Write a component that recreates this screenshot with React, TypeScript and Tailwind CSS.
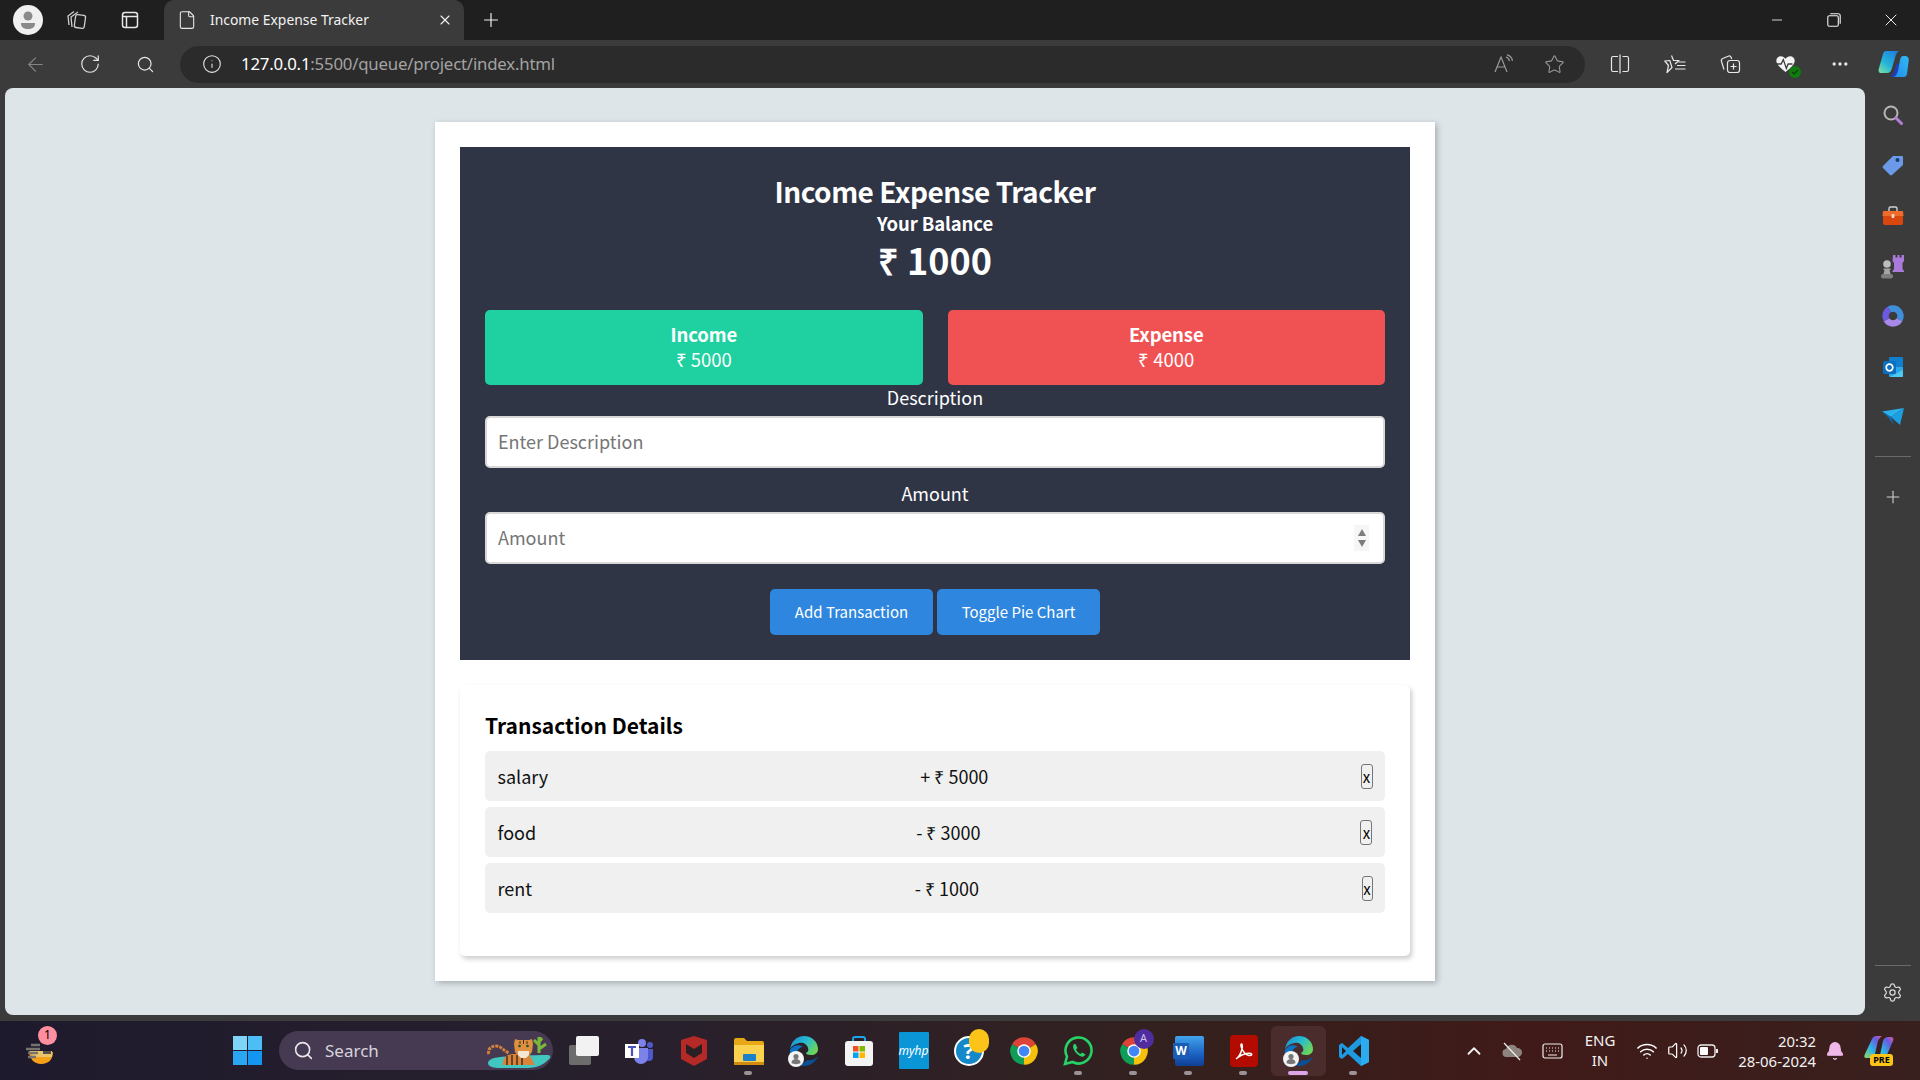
import { ArrowLeft, Bell, ChevronUp, Ellipsis, File, Info, Minus, Plus, RotateCw, Search, Settings, Star, Volume2, Wifi, X } from "lucide-react";
import type { ReactNode } from "react";

const uiFont = "font-['Noto_Sans','Open_Sans',sans-serif]";

const Slot = ({ w, children, className = "" }: { w: string; children?: ReactNode; className?: string }) => (
    <div className={`flex shrink-0 items-center justify-center ${w} ${className}`}>{children}</div>
);

const Chrome = ({ size = 30 }: { size?: number }) => (
    <svg width={size} height={size} viewBox="0 0 24 24">
        <path d="M12 12L2.47 6.5A11 11 0 0 1 21.53 6.5z" fill="#db4437" />
        <path d="M12 12L21.53 6.5A11 11 0 0 1 12 23z" fill="#f4c20d" />
        <path d="M12 12L12 23A11 11 0 0 1 2.47 6.5z" fill="#0f9d58" />
        <circle cx="12" cy="12" r="5.4" fill="#fff" />
        <circle cx="12" cy="12" r="4.3" fill="#4285f4" />
    </svg>
);

const EdgeProfile = () => (
    <svg width="32" height="32" viewBox="0 0 32 32">
        <defs>
            <linearGradient id="edgeA" x1="0" y1="0" x2="1" y2="0.6">
                <stop offset="0" stopColor="#1b86d4" />
                <stop offset="0.55" stopColor="#27bcd0" />
                <stop offset="1" stopColor="#6bd45a" />
            </linearGradient>
        </defs>
        <path d="M2 15C3 6 9 1 16 1c8 0 14 6 14 13 0 4-3 6-7 6-3 0-5-1-5-2 2-1 3-3 2-5-1-4-5-6-9-5-4 1-8 3-9 7z" fill="url(#edgeA)" />
        <path d="M30 21c-2 6-8 10-14 10-3 0-5-1-7-2 4 0 8-1 10-4 3 1 8 0 11-4z" fill="#0b4f96" />
        <path d="M2 15c3-5 9-6 13-3-3 0-5 2-6 5-1 3 0 7 2 10C5 25 1 21 2 15z" fill="#0c73c4" />
        <circle cx="8" cy="24" r="8" fill="#f4f4f4" />
        <circle cx="8" cy="21.5" r="2.6" fill="#777" />
        <path d="M3.5 28c0-3 2-4 4.500-4s4.500 1 4.500 4c-2 1.500-7 1.500-9 0z" fill="#777" />
    </svg>
);

const TaskIcon = ({ children, dot, active }: { children: ReactNode; dot?: boolean; active?: boolean }) => (
    <div className={`relative flex h-[50px] w-[55px] shrink-0 items-center justify-center rounded-[6px] ${active ? "bg-[#4a2c2c]" : ""}`}>
        {children}
        {dot && <div className="absolute bottom-[1px] left-[23px] h-[4px] w-[8px] rounded-full bg-[#9c9295]" />}
        {active && <div className="absolute bottom-[1px] left-[17px] h-[4px] w-[20px] rounded-full bg-[#dba6e6]" />}
    </div>
);

const TabStrip = () => (
    <div className="flex h-[40px] items-end bg-[#1f1f1f] text-white">
        <Slot w="w-[55px]" className="h-[40px]">
            <div className="flex h-[30px] w-[30px] items-center justify-center rounded-full bg-[#f0f0f0]">
                <svg width="18" height="20" viewBox="0 0 18 20">
                    <circle cx="9" cy="6" r="4.500" fill="#8a8a8a" />
                    <path d="M2 13h14v1c0 3-3 5-7 5s-7-2-7-5z" fill="#8a8a8a" />
                </svg>
            </div>
        </Slot>
        <Slot w="w-[44px]" className="h-[40px]">
            <svg width="22" height="22" viewBox="0 0 22 22" fill="none" stroke="#cfcfcf" strokeWidth="1.300">
                <path d="M3 16L2 7l6-4.500" />
                <path d="M6 18L5 8l7-5" />
                <rect x="9" y="6" width="10" height="13" rx="2" transform="rotate(8 14 12)" />
            </svg>
        </Slot>
        <Slot w="w-[62px]" className="h-[40px]">
            <svg width="20" height="20" viewBox="0 0 20 20" fill="none" stroke="#e8e8e8" strokeWidth="1.500">
                <rect x="2.500" y="2.500" width="15" height="15" rx="2.500" />
                <path d="M2.500 6.500h15M6.500 6.500v11" />
            </svg>
        </Slot>
        <div className="ml-[3px] flex h-[40px] w-[300px] items-center rounded-t-[10px] bg-[#3b3b3b] pr-[11px] pl-[13px]">
            <File size={20} strokeWidth={1.3} className="text-[#e6e6e6]" />
            <span className={`ml-[13px] flex-1 text-[13.9px] text-[#f2f2f2] ${uiFont}`}>Income Expense Tracker</span>
            <X size={16} strokeWidth={1.6} className="text-[#f2f2f2]" />
        </div>
        <Slot w="w-[54px]" className="h-[40px]">
            <Plus size={22} strokeWidth={1.3} className="text-[#f0f0f0]" />
        </Slot>
        <div className="flex-1" />
        <Slot w="w-[57px]" className="h-[40px]">
            <Minus size={16} strokeWidth={1.2} />
        </Slot>
        <Slot w="w-[57px]" className="h-[40px]">
            <svg width="14" height="14" viewBox="0 0 14 14" fill="none" stroke="#f2f2f2" strokeWidth="1.100">
                <rect x="0.800" y="2.800" width="10.500" height="10.500" rx="1.500" />
                <path d="M3.200 0.800h8c1.200 0 2 .8 2 2v8" />
            </svg>
        </Slot>
        <Slot w="w-[58px]" className="h-[40px]">
            <X size={20} strokeWidth={1.1} />
        </Slot>
    </div>
);

const Toolbar = () => (
    <div className="flex h-[48px] items-center bg-[#3b3b3b] text-[#e6e6e6]">
        <Slot w="w-[62px]" className="pl-[8px]">
            <ArrowLeft size={23} strokeWidth={1.2} className="text-[#858585]" />
        </Slot>
        <Slot w="w-[56px]">
            <RotateCw size={22} strokeWidth={1.3} />
        </Slot>
        <Slot w="w-[54px]">
            <Search size={19} strokeWidth={1.5} />
        </Slot>
        <div className="ml-[8px] flex h-[37px] w-[1405px] items-center rounded-full bg-[#2b2b2b] pl-[22px]">
            <Info size={20} strokeWidth={1.3} />
            <span className={`ml-[19px] flex-1 text-[16.8px] tracking-[-0.2px] text-[#a3a3a3] ${uiFont}`}>
                <span className="text-white">127.0.0.1</span>:5500/queue/project/index.html
            </span>
            <Slot w="w-[50px]">
                <svg width="20" height="20" viewBox="0 0 20 20" fill="none" stroke="#9a9a9a" strokeWidth="1.200">
                    <path d="M1 18L7 3l6 15M3.500 13h7" />
                    <path d="M12 3c2 .5 3 2 3.500 4M13 .8c3 .7 5 3 5.500 6" />
                </svg>
            </Slot>
            <Slot w="w-[50px]" className="mr-[6px]">
                <Star size={21} strokeWidth={1.2} className="text-[#9a9a9a]" />
            </Slot>
        </div>
        <Slot w="w-[70px]">
            <svg width="20" height="20" viewBox="0 0 20 20" fill="none" stroke="#e8e8e8" strokeWidth="1.200">
                <path d="M8 2.500H3a1.500 1.500 0 0 0-1.500 1.500v12A1.500 1.500 0 0 0 3 17.500h5M12.500 2.500H17A1.500 1.500 0 0 1 18.500 4v12a1.500 1.500 0 0 1-1.500 1.500h-4.500M10 .5v19" />
            </svg>
        </Slot>
        <Slot w="w-[40px]">
            <svg width="22" height="20" viewBox="0 0 22 20" fill="none" stroke="#e8e8e8" strokeWidth="1.200" strokeLinejoin="round">
                <path d="M7.500 1.500l2 5H15l-4 3.500M8 13.500L3 18.500l1.500-7L.8 7l5-.5z" />
                <path d="M14.500 8h7M13 11.500h8.500M11 15h10.500" />
            </svg>
        </Slot>
        <Slot w="w-[70px]">
            <svg width="22" height="22" viewBox="0 0 22 22" fill="none" stroke="#e8e8e8" strokeWidth="1.200">
                <path d="M5 16.500l-2.500-8c-.5-1.500.3-2.800 1.700-3.300l5-2c1.300-.5 2.500 0 3 1.300l.5 1.500" />
                <rect x="8.500" y="7.500" width="12" height="12" rx="2.500" />
                <path d="M14.500 10.500v6M11.500 13.500h6" />
            </svg>
        </Slot>
        <Slot w="w-[40px]">
            <div className="relative h-[20px] w-[21px]">
                <svg width="21" height="20" viewBox="0 0 24 22">
                    <path d="M12 20C5 15 1.500 11 1.500 7 1.500 4 4 2 6.500 2 9 2 11 3.500 12 5c1-1.500 3-3 5.500-3C20 2 22.500 4 22.500 7c0 4-3.500 8-10.500 13z" fill="#f4f4f4" />
                    <path d="M0 11h7l2.500-5 3.500 10 2-5h5" fill="none" stroke="#3b3b3b" strokeWidth="1.500" />
                </svg>
                <div className="absolute right-[-5px] bottom-[-4px] flex h-[12px] w-[12px] items-center justify-center rounded-full bg-[#107c10]">
                    <svg width="8" height="8" viewBox="0 0 8 8" fill="none" stroke="#0a3d0a" strokeWidth="1.200">
                        <path d="M1 4l2 2 4-4" />
                    </svg>
                </div>
            </div>
        </Slot>
        <Slot w="w-[70px]">
            <Ellipsis size={20} strokeWidth={2} />
        </Slot>
        <Slot w="w-[36px]" className="mr-[9px]">
            <svg width="31" height="28" viewBox="0 0 31 28">
                <defs>
                    <linearGradient id="copA" x1="0" y1="1" x2="0.8" y2="0">
                        <stop offset="0" stopColor="#7fe3a0" />
                        <stop offset="0.45" stopColor="#25b4d8" />
                        <stop offset="1" stopColor="#1f7fe0" />
                    </linearGradient>
                    <linearGradient id="copB" x1="0" y1="1" x2="1" y2="0">
                        <stop offset="0" stopColor="#1f8fe8" />
                        <stop offset="1" stopColor="#35b8f5" />
                    </linearGradient>
                </defs>
                <path d="M12 27c2-1 3-3 4-6l3-8 7 3-3 8c-1 2-2 3-4 3z" fill="#1f3fb8" />
                <path d="M8 1h13c-2 1-3 3-4 7l-3 10c-1 3-2 5-5 5H3c-2 0-3-2-2-5L5 4c.5-2 1.500-3 3-3z" fill="url(#copA)" />
                <path d="M26 27H16c2-1 3-3 4-6l2-11c.8-3 1.500-4 3-4h2c2.500 0 4 2 3.800 4L29 24c-.5 2-1.500 3-3 3z" fill="url(#copB)" />
            </svg>
        </Slot>
    </div>
);

const SidebarGlyph = ({ children }: { children: ReactNode }) => <div className="flex h-[50.300px] items-center justify-center">{children}</div>;

const Sidebar = () => (
    <div className="flex w-[55px] shrink-0 flex-col items-center bg-[#3b3b3b] pt-[2px]">
        <SidebarGlyph>
            <svg width="22" height="22" viewBox="0 0 22 22" fill="none">
                <circle cx="9" cy="9" r="6.500" stroke="#b5b5b5" strokeWidth="2" />
                <path d="M14 14l5.500 5.500" stroke="#b57fd9" strokeWidth="3" strokeLinecap="round" />
            </svg>
        </SidebarGlyph>
        <SidebarGlyph>
            <svg width="22" height="22" viewBox="0 0 22 22">
                <path d="M11 2h9a1 1 0 0 1 1 1v8L10 21a1.500 1.500 0 0 1-2 0l-7-7a1.500 1.500 0 0 1 0-2z" fill="#6a9ae8" />
                <circle cx="15.500" cy="6" r="2" fill="#1f3a6e" />
            </svg>
        </SidebarGlyph>
        <SidebarGlyph>
            <svg width="24" height="22" viewBox="0 0 24 22">
                <path d="M8 6V3.500A1.500 1.500 0 0 1 9.500 2h5A1.500 1.500 0 0 1 16 3.500V6" fill="none" stroke="#d0d0d0" strokeWidth="1.400" />
                <path d="M2 6h20l.5 5H1.500z" fill="#f06a2a" />
                <path d="M2 11h20v7a2 2 0 0 1-2 2H4a2 2 0 0 1-2-2z" fill="#d9470f" />
                <rect x="10.500" y="9" width="3" height="4" rx="1" fill="#e8d8c8" />
            </svg>
        </SidebarGlyph>
        <SidebarGlyph>
            <svg width="25" height="25" viewBox="0 0 25 25">
                <path d="M13 1h2.500v2.500h2V1h2v2.500h2V1H24v6l-1.500 2v6l1.500 2v1H12.500v-1l1.500-2V9l-1.500-2z" fill="#a97ad9" />
                <circle cx="7" cy="10" r="3.800" fill="#bdbdbd" />
                <path d="M3.500 14.500h7v1.500h-1l1 4h-7l1-4h-1z" fill="#a5a5a5" />
                <rect x="1" y="20" width="12" height="4.500" rx="2" fill="#7e7e7e" />
            </svg>
        </SidebarGlyph>
        <SidebarGlyph>
            <svg width="24" height="24" viewBox="0 0 24 24" fill="none" strokeWidth="6.500">
                <path d="M8.250 5.500A7.500 7.500 0 0 1 18.500 15.750" stroke="#3f8fdc" />
                <path d="M18.500 15.750A7.500 7.500 0 0 1 5.500 15.750" stroke="#a888e8" />
                <path d="M5.500 15.750A7.500 7.500 0 0 1 8.250 5.500" stroke="#6c5ae0" />
            </svg>
        </SidebarGlyph>
        <SidebarGlyph>
            <svg width="22" height="22" viewBox="0 0 22 22">
                <rect x="7" y="1" width="14" height="10" rx="1" fill="#0f7fd0" />
                <path d="M7 11h14v9a1 1 0 0 1-1 1H8a1 1 0 0 1-1-1z" fill="#28a8ea" />
                <path d="M8 21l13-7v6a1 1 0 0 1-1 1z" fill="#50c8f4" />
                <rect x="1" y="5" width="13" height="13" rx="1.500" fill="#0b6ec0" />
                <circle cx="7.500" cy="11.500" r="3.300" fill="none" stroke="#fff" strokeWidth="1.700" />
            </svg>
        </SidebarGlyph>
        <SidebarGlyph>
            <svg width="24" height="18" viewBox="0 0 24 18">
                <path d="M1 3.500L23 0l-13 9z" fill="#2bb0ee" />
                <path d="M23 0L10 9l9 8z" fill="#1b9fe0" />
                <path d="M1 3.500L10 9l3 8-6-8z" fill="#0b6fb8" />
            </svg>
        </SidebarGlyph>
        <div className="mt-[14px] mb-[30px] h-[1px] w-[36px] bg-[#6a6a6a]" />
        <Plus size={20} strokeWidth={1.3} className="text-[#d0d0d0]" />
        <div className="flex-1" />
        <div className="mb-[16px] h-[1px] w-[36px] bg-[#6a6a6a]" />
        <Settings size={21} strokeWidth={1.4} className="mb-[18px] text-[#dcdcdc]" />
    </div>
);

const MainCard = () => (
    <div className="mt-[34px] h-fit w-[1000px] bg-white p-[25px] font-['Noto_Sans_CJK_SC','Noto_Sans_CJK_JP',sans-serif] text-[18px] leading-[25px] shadow-[2px_2px_6px_rgba(0,0,0,0.25)]">
        <div className="bg-[#2f3545] px-[25px] pt-[25px] pb-[25px] text-center text-white">
            <h1 className="text-[28px] leading-[39px] font-bold tracking-[-0.5px]">Income Expense Tracker</h1>
            <div className="h-[25px] text-[18.5px] leading-[24px] font-bold tracking-[-0.1px]">Your Balance</div>
            <div className="mt-[2px] h-[45px] text-[36px] leading-[43px] font-bold">₹ 1000</div>
            <div className="mt-[27px] flex gap-[25px]">
                <div className="h-[75px] flex-1 rounded-[5px] bg-[#1fd1a0] py-[12.500px]">
                    <div className="h-[25px] text-[18.5px] leading-[23px] font-bold tracking-[-0.1px]">Income</div>
                    <div className="h-[25px] text-[18.5px] leading-[23px]">₹ 5000</div>
                </div>
                <div className="h-[75px] flex-1 rounded-[5px] bg-[#f05254] py-[12.500px]">
                    <div className="h-[25px] text-[18.5px] leading-[23px] font-bold tracking-[-0.1px]">Expense</div>
                    <div className="h-[25px] text-[18.5px] leading-[23px]">₹ 4000</div>
                </div>
            </div>
            <div className="mt-[1.500px] h-[25px] leading-[21px]">Description</div>
            <input
                className="mt-[4.500px] block h-[52px] w-full rounded-[5px] border-2 border-[#d8d8d8] bg-white pr-[12px] pb-[2px] pl-[11px] text-[#222] placeholder:text-[#757575]"
                placeholder="Enter Description"
            />
            <div className="mt-[13.500px] h-[25px] leading-[23px]">Amount</div>
            <div className="relative mt-[5.500px]">
                <input
                    className="block h-[52px] w-full rounded-[5px] border-2 border-[#d8d8d8] bg-white pr-[12px] pb-[2px] pl-[11px] text-[#222] placeholder:text-[#757575]"
                    placeholder="Amount"
                />
                <div className="absolute top-[13px] right-[16px] flex h-[26px] w-[15px] flex-col items-center justify-center gap-[4px] bg-[#f6f6f6]">
                    <div className="h-0 w-0 border-x-[4.500px] border-b-[7px] border-x-transparent border-b-[#7d7d7d]" />
                    <div className="h-0 w-0 border-x-[4.500px] border-t-[7px] border-x-transparent border-t-[#7d7d7d]" />
                </div>
            </div>
            <div className="mt-[25px] flex justify-center gap-[4px]">
                <button className="h-[46px] w-[163px] rounded-[5px] bg-[#2e86de] pb-[2px] text-[15px] text-white">Add Transaction</button>
                <button className="h-[46px] w-[163px] rounded-[5px] bg-[#2e86de] pb-[2px] text-[15px] text-white">Toggle Pie Chart</button>
            </div>
        </div>
        <div className="mt-[25px] rounded-[5px] bg-white px-[25px] pt-[26px] pb-[43px] shadow-[2px_3px_5px_rgba(0,0,0,0.2)]">
            <h2 className="h-[30px] text-[21px] leading-[28px] font-bold text-black">Transaction Details</h2>
            <div className="mt-[10px] flex flex-col gap-[6.200px]">
                {[
                    { name: "salary", amount: "+ ₹ 5000", btn: "w-[12px]" },
                    { name: "food", amount: "- ₹ 3000", btn: "w-[12px]" },
                    { name: "rent", amount: "- ₹ 1000", btn: "w-[11px]" },
                ].map((t) => (
                    <div key={t.name} className="flex h-[50px] items-center justify-between rounded-[5px] bg-[#f0f0f0] px-[12.500px] text-[#111]">
                        <span>{t.name}</span>
                        <span>{t.amount}</span>
                        <button className={`flex h-[25px] items-center justify-center rounded-[3px] border border-[#767676] text-[15px] leading-none text-black ${t.btn}`}>x</button>
                    </div>
                ))}
            </div>
        </div>
    </div>
);

const Taskbar = () => (
    <div className={`flex h-[59px] items-center bg-[linear-gradient(90deg,#1e1a2d_0%,#28202c_35%,#33211f_60%,#401a18_80%,#38201e_100%)] text-white ${uiFont}`}>
        <Slot w="w-[80px]">
            <div className="relative">
                <svg width="30" height="30" viewBox="0 0 30 30">
                    <path d="M4 16h24c0 7-4 12-12 12-7 0-11-5-12-12z" fill="#f6a01a" />
                    <path d="M4 15h23v6H9z" fill="#e9c46a" />
                    <path d="M18 15h8v3h-8z" fill="#55504a" />
                    <path d="M6 9h9M1 13h14M3 17h10M3 21h8" stroke="#77736f" strokeWidth="2.500" />
                </svg>
                <div className="absolute top-[-10px] left-[13px] flex h-[19px] w-[19px] items-center justify-center rounded-full bg-[#ff8e9e] text-[12px] text-black">1</div>
            </div>
        </Slot>
        <div className="ml-[153px] grid h-[29px] w-[29px] grid-cols-2 gap-[1px]">
            <div className="bg-[#7fd5f7]" />
            <div className="bg-[#4dbdf5]" />
            <div className="bg-[#2ba6f2]" />
            <div className="bg-[#1296f0]" />
        </div>
        <div className="ml-[17px] flex h-[39px] w-[274px] items-center rounded-full bg-[#463a52] pl-[14px]">
            <Search size={21} strokeWidth={1.8} className="text-[#e8e8e8]" />
            <span className="ml-[11px] flex-1 text-[17px] text-[#d8d4dc]">Search</span>
            <svg width="68" height="38" viewBox="0 0 68 38" className="mr-[1px]">
                <path d="M10 26c10-2 44-3 54-3 3 0 3 3 0 5-4 4-10 8-20 8H16c-6 0-12-1-12-5 0-2 2-4 6-5z" fill="#42c6c0" />
                <path d="M5 22c-2-4 2-8 7-8 5 0 8 5 13 7" fill="none" stroke="#d4813a" strokeWidth="3" strokeDasharray="3 1" />
                <path d="M19 33c-1-6 3-11 11-11h15l6 11z" fill="#d9833a" />
                <path d="M23 24v9M28 23v10M33 23v10M38 23v10" stroke="#4a2e16" strokeWidth="1.500" />
                <path d="M31 7l3 1h11l3-1 1 5-1 8-5 6h-7l-5-6-1-8z" fill="#dd9040" />
                <path d="M34 19h11v4l-3 3h-5l-3-3z" fill="#f3e7d3" />
                <path d="M36 9v3M39.500 8v4M43 9v3" stroke="#4a2e16" strokeWidth="1" />
                <circle cx="35.500" cy="14" r="1.300" fill="#2a4a2a" />
                <circle cx="43.500" cy="14" r="1.300" fill="#2a4a2a" />
                <path d="M55 21V5M55 13l-5-5M55 17l7-5M55 10l3-4" fill="none" stroke="#7cb83a" strokeWidth="3" />
            </svg>
        </div>
        <div className="ml-[3px] flex">
            <TaskIcon>
                <div className="relative h-[30px] w-[30px]">
                    <div className="absolute top-[9px] left-0 h-[20px] w-[22px] rounded-[2px] bg-[#6c6c6c]" />
                    <div className="absolute top-0 left-[7px] h-[20px] w-[23px] rounded-[2px] bg-[#f2f2f2]" />
                </div>
            </TaskIcon>
            <TaskIcon>
                <svg width="30" height="28" viewBox="0 0 30 28">
                    <circle cx="18" cy="6" r="4" fill="#7b83eb" />
                    <circle cx="26" cy="8" r="3" fill="#5059c9" />
                    <path d="M21 12h8v8a4 4 0 0 1-8 0z" fill="#5059c9" />
                    <path d="M10 11h14v9a7 7 0 0 1-14 0z" fill="#7b83eb" />
                    <rect x="1" y="7" width="14" height="14" fill="#fff" />
                    <path d="M4 10h8M8 10v9" stroke="#4b53bc" strokeWidth="2.200" />
                </svg>
            </TaskIcon>
            <TaskIcon>
                <svg width="28" height="30" viewBox="0 0 28 30">
                    <path d="M14 30L1 23V4l13-4 13 4v19z" fill="#b52a27" />
                    <path d="M14 22L6 17V8l8 5 8-5v9z" fill="#2a2023" />
                </svg>
            </TaskIcon>
            <TaskIcon dot>
                <svg width="30" height="28" viewBox="0 0 30 28">
                    <path d="M0 3a2 2 0 0 1 2-2h8l3 3h15a2 2 0 0 1 2 2v4H0z" fill="#e6a817" />
                    <path d="M0 8h30v18a2 2 0 0 1-2 2H2a2 2 0 0 1-2-2z" fill="#fbd24f" />
                    <rect x="9" y="17" width="13" height="7" rx="1" fill="#1b7fc9" />
                    <rect x="0" y="25" width="30" height="3" fill="#d18c10" />
                </svg>
            </TaskIcon>
            <TaskIcon>
                <EdgeProfile />
            </TaskIcon>
            <TaskIcon>
                <svg width="30" height="32" viewBox="0 0 30 32">
                    <path d="M9 7V4a2 2 0 0 1 2-2h8a2 2 0 0 1 2 2v3" fill="none" stroke="#1aa6e8" strokeWidth="2" />
                    <rect x="1" y="6" width="28" height="25" rx="3" fill="#f4f4f4" />
                    <rect x="9" y="11" width="5.500" height="5.500" fill="#f25022" />
                    <rect x="15.500" y="11" width="5.500" height="5.500" fill="#7fba00" />
                    <rect x="9" y="17.500" width="5.500" height="5.500" fill="#00a4ef" />
                    <rect x="15.500" y="17.500" width="5.500" height="5.500" fill="#ffb900" />
                </svg>
            </TaskIcon>
            <TaskIcon>
                <div className="flex h-[37px] w-[30px] items-center justify-center rounded-[1px] bg-[#0a96d6] text-[12px] italic text-white">myhp</div>
            </TaskIcon>
            <TaskIcon>
                <div className="relative">
                    <div className="flex h-[30px] w-[30px] items-center justify-center rounded-full border-2 border-white bg-[#1488c8] text-[22px] font-bold text-white">?</div>
                    <div className="absolute top-[-7px] left-[15px] h-[24px] w-[20px] rounded-full bg-[#fcc419]" />
                </div>
            </TaskIcon>
            <TaskIcon>
                <Chrome />
            </TaskIcon>
            <TaskIcon dot>
                <svg width="31" height="31" viewBox="0 0 31 31" fill="none">
                    <path d="M2 29l2-7.500A13 13 0 1 1 9.500 27z" stroke="#25d366" strokeWidth="2.600" />
                    <path d="M11 9c-1 1-1.500 3 0 6s4.500 5.500 7 6.500c2 .5 4-.5 4.500-2l-3.500-2-1.500 1.500c-2-1-3.500-2.500-4.500-4.500l1.500-1.500L12.500 9z" fill="#25d366" />
                </svg>
            </TaskIcon>
            <TaskIcon dot>
                <div className="relative">
                    <Chrome />
                    <div className="absolute top-[-7px] left-[15px] flex h-[20px] w-[20px] items-center justify-center rounded-full bg-[#4f2d9e] text-[11px] text-[#cdbdf0]">A</div>
                </div>
            </TaskIcon>
            <TaskIcon dot>
                <div className="relative h-[30px] w-[31px]">
                    <div className="ml-[2px] h-[30px] w-[29px] rounded-[2px] bg-[linear-gradient(180deg,#41a5ee_0%,#2b7cd3_35%,#185abd_68%,#103f91_100%)]" />
                    <div className="absolute top-[7px] left-0 flex h-[16px] w-[16px] items-center justify-center rounded-[1px] bg-[#1a5cb5] text-[12px] font-bold text-white">W</div>
                </div>
            </TaskIcon>
            <TaskIcon dot>
                <div className="flex h-[32px] w-[28px] items-center justify-center rounded-[4px] bg-[#b30b00]">
                    <svg width="20" height="20" viewBox="0 0 20 20" fill="none" stroke="#fff" strokeWidth="1.500">
                        <path d="M2 18c3-2 5-6 6-10 .5-2 .5-5-.5-5S7 6 8 8c1.500 3 4 6 7 6.500 3 .3 3.500-1.500 1.500-2-3-.5-8 1-12 3.500z" />
                    </svg>
                </div>
            </TaskIcon>
            <TaskIcon active>
                <EdgeProfile />
            </TaskIcon>
            <TaskIcon dot>
                <svg width="32" height="32" viewBox="0 0 32 32">
                    <path d="M23 1L31 5v22l-8 4-13-12-6 5-3-2V10l3-2 6 5z" fill="#1e9be0" />
                    <path d="M23 9l-8 7 8 7z" fill="#2a1c1c" />
                    <path d="M23 1L31 5v22l-8 4z" fill="#2bacf0" />
                    <path d="M4 12v8l4-4z" fill="#2a1c1c" />
                </svg>
            </TaskIcon>
        </div>
        <div className="ml-[82px] flex items-center">
            <ChevronUp size={22} strokeWidth={2} className="text-[#f0f0f0]" />
            <Slot w="w-[40px]" className="ml-[7px]">
                <svg width="22" height="20" viewBox="0 0 22 20">
                    <path d="M6 16a4 4 0 0 1-1-8 6 6 0 0 1 11-1 4.500 4.500 0 0 1 1 9z" fill="#8d8480" />
                    <path d="M3 2l16 17" stroke="#eee" strokeWidth="1.200" />
                </svg>
            </Slot>
            <Slot w="w-[40px]">
                <svg width="21" height="18" viewBox="0 0 21 18" fill="none" stroke="#eee" strokeWidth="1.200">
                    <rect x="1" y="2" width="19" height="14" rx="2" />
                    <path d="M4 6h1M7 6h1M10 6h1M13 6h1M16 6h1M4 9h1M7 9h1M10 9h1M13 9h1M16 9h1M6 13h9" />
                </svg>
            </Slot>
            <div className="ml-[8px] w-[40px] text-center text-[15px] leading-[19.500px] text-[#f2f2f2]">
                ENG
                <br />
                IN
            </div>
            <Slot w="w-[34px]" className="ml-[10px]">
                <Wifi size={22} strokeWidth={1.6} />
            </Slot>
            <Slot w="w-[27px]">
                <Volume2 size={21} strokeWidth={1.4} />
            </Slot>
            <Slot w="w-[33px]">
                <svg width="21" height="14" viewBox="0 0 21 14" fill="none">
                    <rect x="1" y="1" width="17" height="12" rx="3" stroke="#eee" strokeWidth="1.300" />
                    <rect x="3" y="3" width="8" height="8" rx="1" fill="#fff" />
                    <rect x="19" y="5" width="2" height="4" fill="#eee" />
                </svg>
            </Slot>
            <div className="w-[92px] text-right text-[14.900px] leading-[20px] text-[#f2f2f2]">
                20:32
                <br />
                28-06-2024
            </div>
            <Bell size={20} strokeWidth={1.4} className="ml-[9px] fill-[#f0b8e8] text-[#f0b8e8]" />
            <div className="relative ml-[19px] h-[30px] w-[30px]">
                <svg width="30" height="24" viewBox="0 0 30 24">
                    <defs>
                        <linearGradient id="copPre" x1="0" y1="1" x2="1" y2="0">
                            <stop offset="0" stopColor="#9ad85a" />
                            <stop offset="0.4" stopColor="#2cb6e6" />
                            <stop offset="0.75" stopColor="#6a5ae0" />
                            <stop offset="1" stopColor="#e45aa0" />
                        </linearGradient>
                    </defs>
                    <path d="M8 3c1-2 2-3 4-3h6c-2 1-3 3-4 5l-3 13c-1 3-3 4-5 4H2c-2 0-2-2-1-4z" fill="url(#copPre)" />
                    <path d="M22 21c-1 2-2 3-4 3h-6c2-1 3-3 4-5l3-14c1-3 3-4 5-4h3c2 0 3 2 2 4z" fill="url(#copPre)" />
                </svg>
                <div className="absolute top-[18px] left-[6px] h-[12px] w-[23px] rounded-[3px] bg-[#fcc419] text-center text-[9px] leading-[12px] font-bold text-black">PRE</div>
            </div>
        </div>
    </div>
);

const App = () => {
    return (
        <div className="flex h-[1080px] w-[1920px] flex-col overflow-hidden bg-[#3b3b3b]">
            <TabStrip />
            <Toolbar />
            <div className="flex h-[933px]">
                <div className="mb-[6px] ml-[5px] flex flex-1 justify-center rounded-[8px] bg-[#dde5e9]">
                    <MainCard />
                </div>
                <Sidebar />
            </div>
            <Taskbar />
        </div>
    );
};

export default App;
